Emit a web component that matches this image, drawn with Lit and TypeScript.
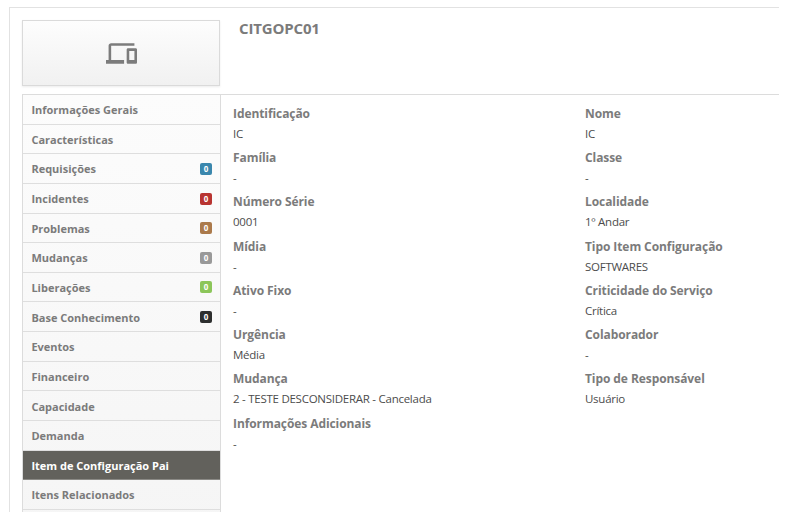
import { LitElement, html, css } from "lit";
import { customElement } from "lit/decorators.js";
import { classMap } from "lit/directives/class-map.js";

interface MenuItem {
  label: string;
  tone?: string;
  active?: boolean;
}

const MENU: MenuItem[] = [
  { label: "Informações Gerais" },
  { label: "Características" },
  { label: "Requisições", tone: "blue" },
  { label: "Incidentes", tone: "red" },
  { label: "Problemas", tone: "brown" },
  { label: "Mudanças", tone: "gray" },
  { label: "Liberações", tone: "green" },
  { label: "Base Conhecimento", tone: "black" },
  { label: "Eventos" },
  { label: "Financeiro" },
  { label: "Capacidade" },
  { label: "Demanda" },
  { label: "Item de Configuração Pai", active: true },
  { label: "Itens Relacionados" },
  { label: "" },
];

const LEFT: [string, string][] = [
  ["Identificação", "IC"],
  ["Família", "-"],
  ["Número Série", "0001"],
  ["Mídia", "-"],
  ["Ativo Fixo", "-"],
  ["Urgência", "Média"],
  ["Mudança", "2 - TESTE DESCONSIDERAR - Cancelada"],
  ["Informações Adicionais", "-"],
];

const RIGHT: [string, string][] = [
  ["Nome", "IC"],
  ["Classe", "-"],
  ["Localidade", "1º Andar"],
  ["Tipo Item Configuração", "SOFTWARES"],
  ["Criticidade do Serviço", "Crítica"],
  ["Colaborador", "-"],
  ["Tipo de Responsável", "Usuário"],
];

@customElement("side-menu")
export class SideMenu extends LitElement {
  static styles = css`
    :host {
      display: block;
      box-sizing: border-box;
      width: 199px;
      border: 1px solid #dcdcdc;
      border-bottom: 0;
      background: linear-gradient(#fcfcfc, #f5f5f5);
    }
    .row {
      box-sizing: border-box;
      height: 29.65px;
      padding: 0.6px 8px 0 8.4px;
      display: flex;
      align-items: center;
      justify-content: space-between;
      border-bottom: 1px solid #dedede;
      font-size: 11px;
      font-weight: 700;
      color: #7b7b7b;
      white-space: nowrap;
    }
    .active {
      background: #62615c;
      color: #fff;
      border-bottom-color: #8b8a86;
    }
    .badge {
      width: 12px;
      height: 12px;
      border-radius: 2px;
      color: #fff;
      font-size: 8px;
      line-height: 12px;
      text-align: center;
    }
    .blue { background: #3a87ad; }
    .red { background: #b83431; }
    .brown { background: #ab7a4b; }
    .gray { background: #999; }
    .green { background: #8cc65a; }
    .black { background: #2d2f2f; }
  `;
  render() {
    return MENU.map(
      (m) => html`<div class=${classMap({ row: true, active: !!m.active })}>
        <span>${m.label}</span>
        ${m.tone ? html`<span class="badge ${m.tone}">0</span>` : ""}
      </div>`
    );
  }
}

@customElement("app-root")
export class AppRoot extends LitElement {
  static styles = css`
    :host {
      display: block;
      box-sizing: border-box;
      height: 518px;
      padding: 7px 13px 6px 9px;
      background: #fff;
      overflow: hidden;
      font-family: "Open Sans", "Noto Sans", sans-serif;
    }
    .panel {
      box-sizing: border-box;
      height: 505px;
      padding: 12px 0 0 12px;
      border-top: 1px solid #e2e2e2;
      border-left: 1px solid #e2e2e2;
      overflow: hidden;
    }
    .top {
      display: flex;
      height: 74px;
    }
    .tile {
      box-sizing: border-box;
      width: 198px;
      height: 66px;
      display: flex;
      align-items: center;
      justify-content: center;
      border: 1px solid #dadada;
      background: linear-gradient(#fdfdfd, #f1f1f1);
      box-shadow: 0 1px 2px rgba(0, 0, 0, 0.08);
    }
    .tile svg {
      width: 31px;
      height: 31px;
      fill: #7c7c7c;
    }
    .title {
      margin: -2px 0 0 19px;
      font-size: 15px;
      letter-spacing: -0.15px;
      line-height: 20px;
      font-weight: 700;
      color: #7b7b7b;
    }
    .body {
      display: flex;
    }
    .fields {
      flex: 1;
      display: grid;
      grid-template-columns: 352px 1fr;
      align-items: start;
      padding: 8px 0 0 12px;
      border-top: 1px solid #dcdcdc;
    }
    .field {
      height: 44.22px;
      white-space: nowrap;
    }
    .name {
      height: 21px;
      line-height: 21px;
      font-size: 12px;
      letter-spacing: -0.08px;
      font-weight: 700;
      color: #7b7b7b;
    }
    .value {
      line-height: 20px;
      font-size: 11.5px;
      letter-spacing: -0.26px;
      color: #4c4c4c;
    }
  `;
  private column(rows: [string, string][]) {
    return html`<div>
      ${rows.map(
        ([name, value]) => html`<div class="field">
          <div class="name">${name}</div>
          <div class="value">${value}</div>
        </div>`
      )}
    </div>`;
  }
  render() {
    return html`<div class="panel">
      <div class="top">
        <div class="tile">
          <svg viewBox="0 0 24 24">
            <path d="M4 6h18V4H4c-1.1 0-2 .9-2 2v11H0v3h14v-3H4V6zm19 2h-6c-.55 0-1 .45-1 1v10c0 .55.45 1 1 1h6c.55 0 1-.45 1-1V9c0-.55-.45-1-1-1zm-1 9h-4v-7h4v7z" />
          </svg>
        </div>
        <div class="title">CITGOPC01</div>
      </div>
      <div class="body">
        <side-menu></side-menu>
        <div class="fields">${this.column(LEFT)}${this.column(RIGHT)}</div>
      </div>
    </div>`;
  }
}
